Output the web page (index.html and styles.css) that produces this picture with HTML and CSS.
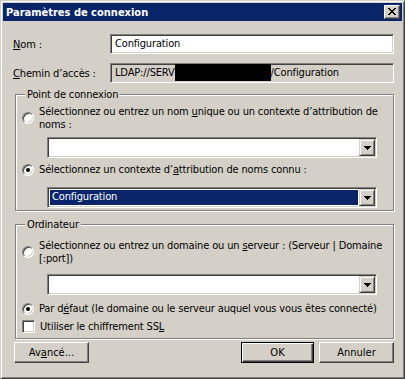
FILE: index.html
```html
<!DOCTYPE html>
<html lang="fr">
<head>
    <meta charset="UTF-8">
    <title>Paramètres de connexion</title>
    <link rel="stylesheet" href="styles.css">
</head>
<body>

    <div class="window">
        <div class="titlebar">
            <span class="title">Paramètres de connexion</span>
            <span class="close-btn">
                <svg width="8" height="7" viewBox="0 0 8 7" shape-rendering="crispEdges"><path fill="#000" d="M0 0h2v1h-2zM6 0h2v1h-2zM1 1h2v1h-2zM5 1h2v1h-2zM2 2h4v1h-4zM3 3h2v1h-2zM2 4h4v1h-4zM1 5h2v1h-2zM5 5h2v1h-2zM0 6h2v1h-2zM6 6h2v1h-2z"/></svg>
            </span>
        </div>

        <div class="content">
            <div class="field-row first">
                <label class="field-label"><u>N</u>om :</label>
                <div class="edit">Configuration</div>
            </div>
            <div class="field-row second">
                <label class="field-label"><u>C</u>hemin d’accès :</label>
                <div class="edit readonly">LDAP://SERV<span class="redacted"></span>/Configuration</div>
            </div>

            <fieldset class="group group-point">
                <legend>Point de connexion</legend>
                <div class="option opt-unique">
                    <span class="radio"></span>
                    <span class="option-text">Sélectionnez ou entrez un nom <u>u</u>nique ou un contexte d’attribution de noms :</span>
                </div>
                <div class="combo combo-unique">
                    <div class="combo-value"></div>
                    <span class="drop-btn"><svg width="7" height="4" viewBox="0 0 7 4" shape-rendering="crispEdges"><path fill="#000" d="M0 0h7v1h-1v1h-1v1h-1v1h-1v-1h-1v-1h-1v-1h-1z"/></svg></span>
                </div>
                <div class="option opt-known">
                    <span class="radio checked"></span>
                    <span class="option-text">Sélectionnez un contexte d’<u>a</u>ttribution de noms connu :</span>
                </div>
                <div class="combo combo-known">
                    <div class="combo-value selected">Configuration</div>
                    <span class="drop-btn"><svg width="7" height="4" viewBox="0 0 7 4" shape-rendering="crispEdges"><path fill="#000" d="M0 0h7v1h-1v1h-1v1h-1v1h-1v-1h-1v-1h-1v-1h-1z"/></svg></span>
                </div>
            </fieldset>

            <fieldset class="group group-computer">
                <legend>Ordinateur</legend>
                <div class="option opt-server">
                    <span class="radio"></span>
                    <span class="option-text">Sélectionnez ou entrez un domaine ou un <u>s</u>erveur : (Serveur | Domaine [:port])</span>
                </div>
                <div class="combo combo-server">
                    <div class="combo-value"></div>
                    <span class="drop-btn"><svg width="7" height="4" viewBox="0 0 7 4" shape-rendering="crispEdges"><path fill="#000" d="M0 0h7v1h-1v1h-1v1h-1v1h-1v-1h-1v-1h-1v-1h-1z"/></svg></span>
                </div>
                <div class="option opt-default">
                    <span class="radio checked"></span>
                    <span class="option-text">Par d<u>é</u>faut (le domaine ou le serveur auquel vous vous êtes connecté)</span>
                </div>
                <div class="option opt-ssl">
                    <span class="checkbox"></span>
                    <span class="option-text">Utiliser le chiffrement SS<u>L</u></span>
                </div>
            </fieldset>

            <div class="buttons">
                <button class="btn">Av<u>a</u>ncé...</button>
                <span class="spacer"></span>
                <button class="btn default">OK</button>
                <button class="btn">Annuler</button>
            </div>
        </div>
    </div>

</body>
</html>
```

FILE: styles.css
```css
body {
    margin: 0;
    padding: 0;
    background-color: #d4d0c8;
    font-family: "DejaVu Sans Condensed", "Liberation Sans", sans-serif;
    font-size: 11px;
    line-height: 13px;
    letter-spacing: -0.15px;
    color: #000;
}

u {
    text-decoration: underline;
    text-underline-offset: 1px;
}

.window {
    box-sizing: border-box;
    width: 405px;
    height: 379px;
    padding: 2px;
    border: 1px solid;
    border-color: #d4d0c8 #404040 #404040 #d4d0c8;
    box-shadow: inset 1px 1px 0 #fff, inset -1px -1px 0 #808080;
    background-color: #d4d0c8;
    display: flex;
    flex-direction: column;
}

.titlebar {
    height: 18px;
    background-color: #0a246a;
    display: flex;
    align-items: center;
    padding: 0 2px 0 3px;
}

.title {
    flex: 1;
    color: #fff;
    font-weight: bold;
    letter-spacing: 0;
}

.close-btn {
    box-sizing: border-box;
    width: 16px;
    height: 14px;
    border: 1px solid;
    border-color: #fff #404040 #404040 #fff;
    box-shadow: inset -1px -1px 0 #808080;
    background-color: #d4d0c8;
    display: flex;
    align-items: center;
    justify-content: center;
    padding: 0 1px 1px 0;
}

.close-btn svg {
    display: block;
}

.content {
    padding: 0 8px 0 10px;
}

.field-row {
    display: flex;
    align-items: center;
}

.field-row.first {
    margin-top: 13px;
}

.field-row.second {
    margin-top: 9px;
}

.field-label {
    width: 97px;
}

.edit {
    box-sizing: border-box;
    flex: 1;
    height: 20px;
    padding: 2px 4px 0;
    border: 1px solid;
    border-color: #808080 #fff #fff #808080;
    box-shadow: inset 1px 1px 0 #404040, inset -1px -1px 0 #d4d0c8;
    background-color: #fff;
    white-space: nowrap;
    overflow: hidden;
}

.edit.readonly {
    background-color: #d4d0c8;
}

.redacted {
    display: inline-block;
    width: 96px;
    height: 17px;
    margin-top: -2px;
    vertical-align: top;
    background-color: #000;
}

.group {
    margin: 5px 0 0 2px;
    padding: 0 1px 2px 6px;
    border: 1px solid #808080;
    box-shadow: inset 1px 1px 0 #fff, 1px 1px 0 #fff;
    min-width: 0;
}

.group legend {
    padding: 0 2px;
    margin-left: 3px;
    line-height: 13px;
    background-color: #d4d0c8;
}

.group-computer {
    margin-top: 7px;
    padding-bottom: 5px;
}

.option {
    display: flex;
    align-items: center;
}

.option-text {
    flex: 1;
    padding-left: 5px;
}

.opt-unique {
    margin-top: 4px;
}

.opt-known {
    margin-top: 5px;
}

.opt-server {
    margin-top: 8px;
}

.opt-default {
    margin-top: 7px;
}

.opt-ssl {
    margin-top: 5px;
}

.radio {
    box-sizing: border-box;
    position: relative;
    width: 12px;
    height: 12px;
    flex: none;
    border-radius: 50%;
    border: 1px solid;
    border-color: #808080 #fff #fff #808080;
    box-shadow: inset 1px 1px 0 #404040, inset -1px -1px 0 #d4d0c8;
    background-color: #fff;
}

.radio.checked::after {
    content: "";
    position: absolute;
    left: 3px;
    top: 3px;
    width: 4px;
    height: 4px;
    border-radius: 50%;
    background-color: #000;
}

.checkbox {
    box-sizing: border-box;
    width: 13px;
    height: 13px;
    flex: none;
    border: 1px solid;
    border-color: #808080 #fff #fff #808080;
    box-shadow: inset 1px 1px 0 #404040, inset -1px -1px 0 #d4d0c8;
    background-color: #fff;
}

.combo {
    box-sizing: border-box;
    display: flex;
    height: 21px;
    margin: 0 15px 0 25px;
    padding: 2px;
    border: 1px solid;
    border-color: #808080 #fff #fff #808080;
    box-shadow: inset 1px 1px 0 #404040, inset -1px -1px 0 #d4d0c8;
    background-color: #fff;
}

.combo-unique {
    margin-top: 6px;
}

.combo-known {
    margin-top: 11px;
}

.combo-server {
    margin-top: 9px;
}

.combo-value {
    flex: 1;
    padding-left: 2px;
    margin-right: 1px;
}

.combo-value.selected {
    background-color: #0a246a;
    color: #fff;
}

.drop-btn {
    box-sizing: border-box;
    width: 16px;
    height: 17px;
    margin: -1px -1px 0 0;
    border: 1px solid;
    border-color: #d4d0c8 #404040 #404040 #d4d0c8;
    box-shadow: inset 1px 1px 0 #fff, inset -1px -1px 0 #808080;
    background-color: #d4d0c8;
    display: flex;
    align-items: center;
    justify-content: center;
}

.buttons {
    display: flex;
    margin-top: 3px;
    padding-left: 1px;
}

.spacer {
    flex: 1;
}

.btn {
    box-sizing: border-box;
    width: 75px;
    height: 21px;
    padding: 0;
    font: inherit;
    color: #000;
    border: 1px solid;
    border-color: #fff #404040 #404040 #fff;
    box-shadow: inset -1px -1px 0 #808080;
    background-color: #d4d0c8;
}

.btn.default {
    width: 73px;
    margin-right: 5px;
    border-color: #000;
    box-shadow: inset 1px 1px 0 #fff, inset -1px -1px 0 #404040, inset -2px -2px 0 #808080;
}
```
